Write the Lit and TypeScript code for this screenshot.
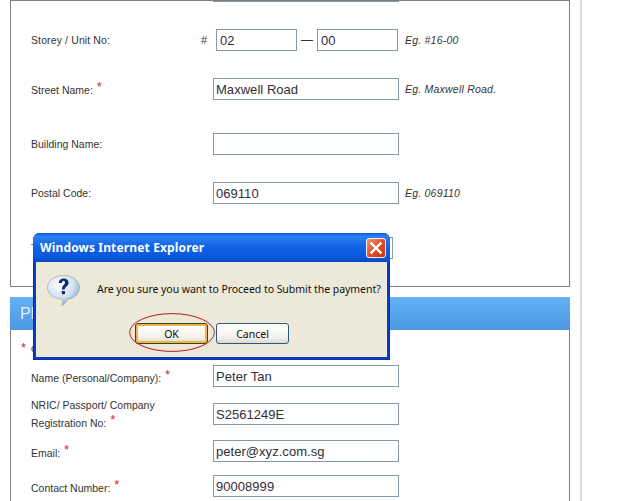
import { LitElement, html, css } from "lit";
import { customElement } from "lit/decorators.js";

@customElement("app-root")
export class AppRoot extends LitElement {
  static styles = css`
    :host { display: block; width: 640px; height: 501px; overflow: hidden; position: relative; background: #fff;
      font-family: "Liberation Sans", Arial, sans-serif; color: #333; font-size: 10.5px; }
    .page { display: flex; padding-left: 10px; height: 501px; }
    .main { width: 560px; display: flex; flex-direction: column; }
    .strip { width: 2px; margin-left: 10px; background: #d9d9d9; }
    .panel1 { box-sizing: border-box; height: 287px; border: 1px solid #7f7f7f; padding-left: 20px; }
    .stub { height: 1px; width: 186px; margin-left: 182px; background: #8495a8; }
    .rows1 { padding-top: 27px; display: flex; flex-direction: column; }
    .row { display: flex; align-items: center; height: 22px; }
    .mt27 { margin-top: 27px; } .mt33 { margin-top: 33px; } .mt16 { margin-top: 16px; }
    .mt15 { margin-top: 15px; } .mt13 { margin-top: 13px; } .mt7 { margin-top: 7px; }
    .label { width: 182px; line-height: 18px; flex: none; }
    .label.narrow { width: 170px; letter-spacing: 0.12px; }
    .label.nudge { padding-top: 2px; }
    .label.low { padding-top: 4px; }
    .hash { width: 15px; font-size: 11px; }
    .star { color: #d8233a; font-size: 13px; vertical-align: 3px; line-height: 0; margin-left: 1px; }
    input { box-sizing: border-box; height: 22px; width: 186px; border: 1px solid #8497ac; padding: 0 2px; margin: 0;
      font-family: "Liberation Sans", Arial, sans-serif; font-size: 13px; letter-spacing: 0.04px; color: #332c3a; background: #fff; outline: none; border-radius: 0; flex: none; }
    input.short { width: 81px; padding-left: 3px; }
    input.mid { width: 180px; }
    .dash { width: 20px; text-align: center; font-size: 12px; }
    .hint { font-style: italic; margin-left: 6px; letter-spacing: 0.22px; color: #333; }
    .hint.tight { margin-left: 7px; }
    .head { height: 33px; margin-top: 10px; box-sizing: border-box; padding-left: 10px; line-height: 33px; color: #e3f0fc; font-size: 16px;
      background: linear-gradient(#66b0f6, #4a99e3); }
    .panel2 { flex: 1; border-left: 1px solid #7f7f7f; border-right: 1px solid #7f7f7f; padding: 8px 0 0 20px; }
    .note { height: 20px; margin-left: -10px; display: flex; align-items: center; }
    .note .star { width: 10px; margin: 0; }
    .dialog { position: absolute; left: 33px; top: 233px; width: 357px; height: 127px; box-sizing: border-box;
      border-radius: 7px 7px 0 0; background: #0a3ec8; padding: 0 3px 3px; display: flex; flex-direction: column;
      box-shadow: inset 0 0 0 1px #0031a8; }
    .title { height: 29px; flex: none; margin: 0 -3px; border-radius: 7px 7px 0 0; padding: 0 5px 0 7px; display: flex; align-items: center; justify-content: space-between;
      background: linear-gradient(#0a5be0 0, #2b80f2 12%, #0f62e6 50%, #0a58dc 85%, #0648c4 100%);
      color: #fff; font: bold 12px "Noto Sans", Verdana, sans-serif; letter-spacing: 0.14px; }
    .close { width: 20px; height: 20px; display: block; margin-right: -1px; }
    .body { flex: 1; background: #ece9d8; display: flex; flex-direction: column; padding: 12px 0 0 11px; }
    .msg { display: flex; height: 30px; align-items: center; margin-top: 1px; }
    .msg svg { width: 33px; height: 31px; flex: none; margin-right: 17px; }
    .msg span { font: 10.5px "Noto Sans", Verdana, sans-serif; color: #111; white-space: nowrap; letter-spacing: -0.05px; margin-top: -2px; }
    .btns { display: flex; gap: 8px; margin: 18px 0 0 88px; }
    button { box-sizing: border-box; width: 73px; height: 21px; padding: 0; border: 1px solid #2a5a86; border-radius: 3px;
      font: 10.5px "Noto Sans", Verdana, sans-serif; color: #111; background: linear-gradient(#fff, #f3f2ea 70%, #dcd8cc); }
    button.def { border-color: #34491f; box-shadow: inset 0 0 0 2px #f0b24a; }
    .ring { position: absolute; left: 96px; top: 80px; width: 86px; height: 39px; pointer-events: none; }
  `;

  render() {
    const star = html`<span class="star">*</span>`;
    return html`
      <div class="page">
        <div class="main">
          <div class="panel1">
            <div class="stub"></div>
            <div class="rows1">
              <div class="row">
                <div class="label narrow">Storey / Unit No:</div>
                <div class="hash">#</div>
                <input class="short" value="02" />
                <div class="dash">—</div>
                <input class="short" value="00" />
                <div class="hint tight">Eg. #16-00</div>
              </div>
              <div class="row mt27">
                <div class="label nudge">Street Name: ${star}</div>
                <input value="Maxwell Road" />
                <div class="hint">Eg. Maxwell Road.</div>
              </div>
              <div class="row mt33">
                <div class="label">Building Name:</div>
                <input value="" />
              </div>
              <div class="row mt27">
                <div class="label">Postal Code:</div>
                <input value="069110" />
                <div class="hint">Eg. 069110</div>
              </div>
              <div class="row mt33">
                <div class="label">Telephone:</div>
                <input class="mid" value="" />
              </div>
            </div>
          </div>
          <div class="head">Please provide payer details</div>
          <div class="panel2">
            <div class="note">${star}<span>compulsory fields</span></div>
            <div class="row mt7">
              <div class="label low">Name (Personal/Company): ${star}</div>
              <input value="Peter Tan" />
            </div>
            <div class="row mt16">
              <div class="label">NRIC/ Passport/ Company<br />Registration No: ${star}</div>
              <input value="S2561249E" />
            </div>
            <div class="row mt15">
              <div class="label low">Email: ${star}</div>
              <input value="peter@xyz.com.sg" />
            </div>
            <div class="row mt13">
              <div class="label low">Contact Number: ${star}</div>
              <input value="90008999" />
            </div>
          </div>
        </div>
        <div class="strip"></div>
      </div>

      <div class="dialog">
        <div class="title">
          <span>Windows Internet Explorer</span>
          <svg class="close" viewBox="0 0 20 20">
            <defs>
              <linearGradient id="cg" x1="0" y1="0" x2="1" y2="1">
                <stop offset="0" stop-color="#ee9a7c" />
                <stop offset="0.5" stop-color="#e0532c" />
                <stop offset="1" stop-color="#c5330f" />
              </linearGradient>
            </defs>
            <rect x="0.5" y="0.5" width="19" height="19" rx="2.5" fill="url(#cg)" stroke="#f4ece8" />
            <path d="M5.5 5.5 L14.5 14.5 M14.5 5.5 L5.5 14.5" stroke="#fff" stroke-width="2.4" stroke-linecap="square" />
          </svg>
        </div>
        <div class="body">
          <div class="msg">
            <svg viewBox="0 0 33 31">
              <defs>
                <radialGradient id="qg" cx="0.38" cy="0.3" r="0.8">
                  <stop offset="0" stop-color="#ffffff" />
                  <stop offset="0.55" stop-color="#d3e2f0" />
                  <stop offset="1" stop-color="#6f93b6" />
                </radialGradient>
              </defs>
              <path d="M16.5 0.5 C25.5 0.5 32.5 5.5 32.5 12.5 C32.5 19 27 23.5 20.5 24 C19.5 26.5 17.5 29.5 15 30.5 C15.8 28 16 26 15.5 24.2 C7 23.8 0.5 19 0.5 12.5 C0.5 5.5 7.5 0.5 16.5 0.5 Z" fill="url(#qg)" stroke="#8fa9c2" stroke-width="0.7" />
              <path d="M11.8 8 C12 4.8 14.5 3.6 16.8 3.6 C19.6 3.6 21.6 5.4 21.6 7.8 C21.6 11.2 17.9 11.4 17.8 14.6 L15 14.6 C14.8 10.6 18 9.8 18 7.6 C18 6.4 17.4 5.7 16.5 5.7 C15.4 5.7 15 6.8 15 8 Z" fill="#13296d" />
              <rect x="14.8" y="16" width="3.2" height="3.2" rx="0.6" fill="#13296d" />
            </svg>
            <span>Are you sure you want to Proceed to Submit the payment?</span>
          </div>
          <div class="btns">
            <button class="def">OK</button>
            <button>Cancel</button>
          </div>
        </div>
        <svg class="ring" viewBox="0 0 86 39">
          <ellipse cx="43" cy="19.5" rx="42.4" ry="18.9" fill="none" stroke="#c4142c" stroke-width="1" />
        </svg>
      </div>
    `;
  }
}
